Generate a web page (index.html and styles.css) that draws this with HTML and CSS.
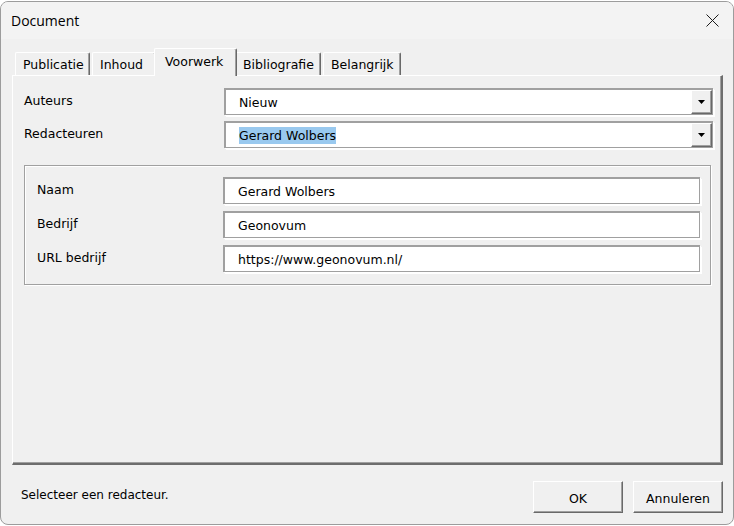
FILE: index.html
```html
<!DOCTYPE html>
<html lang="nl">
<head>
<meta charset="utf-8">
<title>Document</title>
<link rel="stylesheet" href="styles.css">
</head>
<body>
<div class="window">
  <div class="titlebar">
    <span class="title">Document</span>
    <div class="close">
      <svg width="13" height="13" viewBox="0 0 13 13"><path d="M0.5 0.5 L12.5 12.5 M12.5 0.5 L0.5 12.5" stroke="#1c1c1c" stroke-width="1" fill="none"/></svg>
    </div>
  </div>
  <div class="dialog">
    <div class="tabs">
      <div class="tab tab-publicatie">Publicatie</div>
      <div class="tab tab-inhoud">Inhoud</div>
      <div class="tab active tab-voorwerk">Voorwerk</div>
      <div class="tab tab-bibliografie">Bibliografie</div>
      <div class="tab tab-belangrijk">Belangrijk</div>
    </div>
    <div class="panel">
      <div class="field-row">
        <span class="label">Auteurs</span>
        <div class="combo">
          <span class="value">Nieuw</span>
          <span class="drop"><svg width="7" height="4" viewBox="0 0 7 4"><path d="M0 0 H7 L3.5 4 Z" fill="#000"/></svg></span>
        </div>
      </div>
      <div class="field-row">
        <span class="label">Redacteuren</span>
        <div class="combo">
          <span class="value"><span class="sel">Gerard Wolbers</span></span>
          <span class="drop"><svg width="7" height="4" viewBox="0 0 7 4"><path d="M0 0 H7 L3.5 4 Z" fill="#000"/></svg></span>
        </div>
      </div>
      <div class="group">
        <div class="group-row">
          <span class="glabel">Naam</span>
          <div class="input">Gerard Wolbers</div>
        </div>
        <div class="group-row">
          <span class="glabel">Bedrijf</span>
          <div class="input">Geonovum</div>
        </div>
        <div class="group-row">
          <span class="glabel">URL bedrijf</span>
          <div class="input">https://www.geonovum.nl/</div>
        </div>
      </div>
    </div>
    <div class="footer">
      <span class="status">Selecteer een redacteur.</span>
      <div class="buttons">
        <button class="btn">OK</button>
        <button class="btn">Annuleren</button>
      </div>
    </div>
  </div>
</div>
</body>
</html>
```
FILE: styles.css
```css
* { box-sizing: border-box; }
html, body { margin: 0; padding: 0; background: #ffffff; }
body {
  font-family: "DejaVu Sans", "Liberation Sans", sans-serif;
  font-size: 12.5px;
  color: #000;
}
.window {
  margin-top: 1px;
  width: 734px;
  height: 524px;
  border: 1px solid #9c9c9c;
  border-radius: 8px;
  background: #f0f0f0;
  display: flex;
  flex-direction: column;
  overflow: hidden;
}
.titlebar {
  flex: none;
  height: 37px;
  background: #f3f3f3;
  display: flex;
  align-items: center;
  justify-content: space-between;
  padding: 0 0 1px 10px;
}
.title {
  font-family: "Open Sans", "Noto Sans", sans-serif;
  font-size: 14px;
  color: #000;
}
.close {
  width: 42px;
  height: 36px;
  display: flex;
  align-items: center;
  justify-content: center;
}
.close svg { display: block; }
.dialog {
  flex: 1;
  display: flex;
  flex-direction: column;
  padding: 9px 10px 0 11px;
}
.tabs {
  flex: none;
  display: flex;
  align-items: flex-end;
  height: 27px;
  padding-left: 3px;
}
.tab {
  flex: none;
  height: 23px;
  display: flex;
  align-items: center;
  padding: 0 0 0 7px;
  border-top: 1px solid #fff;
  border-left: 1px solid #fff;
  border-right: 1px solid #696969;
  box-shadow: inset -1px 0 0 #a0a0a0;
  border-radius: 2px 2px 0 0;
  margin-right: 2px;
  background: #f0f0f0;
  white-space: nowrap;
}
.tab-publicatie { width: 75px; }
.tab-inhoud { width: 64px; }
.tab-voorwerk { width: 83px; }
.tab-bibliografie { width: 86px; }
.tab-belangrijk { width: 78px; }
.tab.active {
  height: 28px;
  margin: 0 -2px -1px -4px;
  padding: 0 0 3px 10px;
  position: relative;
  z-index: 1;
}
.panel {
  flex: none;
  height: 390px;
  border-top: 1px solid #fff;
  border-left: 1px solid #fff;
  border-right: 2px solid #6d6d6d;
  border-bottom: 2px solid #6d6d6d;
  box-shadow: inset -1px -1px 0 #a0a0a0;
  padding: 12px 8px 0 11px;
  display: flex;
  flex-direction: column;
  gap: 6px;
}
.field-row {
  display: flex;
  align-items: center;
  height: 27px;
}
.label { width: 200px; flex: none; padding-bottom: 2px; }
.combo, .input {
  flex: 1;
  height: 27px;
  display: flex;
  align-items: center;
  background: #fff;
  border-top: 2px solid #a0a0a0;
  border-left: 2px solid #a0a0a0;
  border-right: 1px solid #a0a0a0;
  border-bottom: 1px solid #a0a0a0;
  box-shadow: 1px 1px 0 #fff, 2px 2px 0 #fff;
}
.value { flex: 1; padding-left: 13px; white-space: nowrap; }
.sel {
  display: inline-block;
  background: #99c9ef;
  line-height: 17px;
}
.drop {
  align-self: flex-start;
  width: 21px;
  height: 24px;
  display: flex;
  align-items: center;
  justify-content: center;
  background: #f0f0f0;
  border-top: 1px solid #fff;
  border-left: 1px solid #fff;
  border-right: 1px solid #696969;
  border-bottom: 1px solid #696969;
  box-shadow: inset -1px -1px 0 #a0a0a0;
}
.drop svg { display: block; }
.group {
  margin-top: 11px;
  margin-right: 2px;
  height: 120px;
  border: 1px solid #a0a0a0;
  box-shadow: inset 1px 1px 0 #fff, 1px 1px 0 #fff;
  padding: 11px 10px 0 12px;
  display: flex;
  flex-direction: column;
  gap: 7px;
}
.group-row {
  display: flex;
  align-items: center;
  height: 27px;
}
.glabel { width: 186px; flex: none; padding-bottom: 2px; }
.input { padding-left: 13px; white-space: nowrap; }
.footer {
  flex: 1;
  display: flex;
  align-items: center;
  justify-content: space-between;
  padding: 16px 0 11px 0;
}
.status { margin: 0 0 5px 9px; font-size: 12px; }
.buttons { display: flex; gap: 10px; }
.btn {
  width: 90px;
  height: 32px;
  padding: 2px 0 0 0;
  margin: 0;
  font: inherit;
  color: #000;
  background: #f0f0f0;
  border-top: 1px solid #fff;
  border-left: 1px solid #fff;
  border-right: 1px solid #696969;
  border-bottom: 1px solid #696969;
  border-radius: 0;
  box-shadow: inset -1px -1px 0 #a0a0a0;
}
```
